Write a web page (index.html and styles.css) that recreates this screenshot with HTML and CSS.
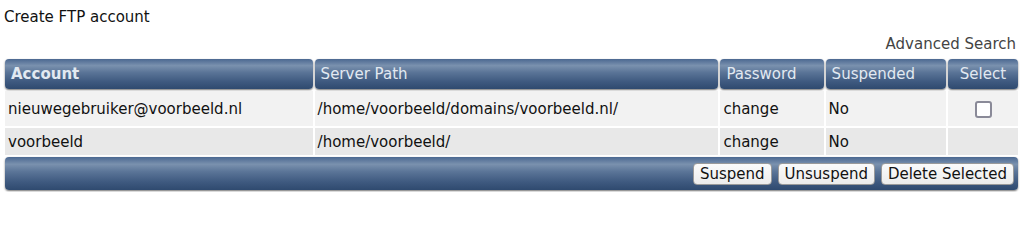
FILE: index.html
```html
<!DOCTYPE html>
<html>
<head>
<meta charset="utf-8">
<link rel="stylesheet" href="styles.css">
</head>
<body>
<div class="page">
  <div class="title">Create FTP account</div>
  <div class="search-line"><a class="adv">Advanced Search</a></div>
  <table class="list">
    <thead>
      <tr>
        <th class="c-account bold">Account</th>
        <th class="c-path">Server Path</th>
        <th class="c-pass">Password</th>
        <th class="c-susp">Suspended</th>
        <th class="c-sel center">Select</th>
      </tr>
    </thead>
    <tbody>
      <tr class="r1">
        <td>nieuwegebruiker@voorbeeld.nl</td>
        <td>/home/voorbeeld/domains/voorbeeld.nl/</td>
        <td>change</td>
        <td>No</td>
        <td class="center"><span class="check"></span></td>
      </tr>
      <tr class="r2">
        <td>voorbeeld</td>
        <td>/home/voorbeeld/</td>
        <td>change</td>
        <td>No</td>
        <td></td>
      </tr>
    </tbody>
    <tfoot>
      <tr>
        <td colspan="5" class="foot">
          <div class="btns">
            <button class="btn">Suspend</button>
            <button class="btn">Unsuspend</button>
            <button class="btn">Delete Selected</button>
          </div>
        </td>
      </tr>
    </tfoot>
  </table>
</div>
</body>
</html>
```

FILE: styles.css
```css
html, body {
  margin: 0;
  padding: 0;
  background: #ffffff;
}
body {
  font-family: "DejaVu Sans", Verdana, sans-serif;
  font-size: 15px;
  line-height: 18px;
  color: #111;
}
.page {
  padding: 8px 4px 0 3px;
}
.title {
  padding-left: 1px;
  height: 18px;
}
.search-line {
  display: flex;
  justify-content: flex-end;
  margin-top: 9px;
  padding-right: 4px;
}
.adv {
  color: #444;
}
.list {
  width: 100%;
  border-collapse: separate;
  border-spacing: 2px;
  margin-top: 4px;
}
.list th {
  height: 30px;
  padding: 0 6px;
  text-align: left;
  font-weight: normal;
  color: #e2e9f1;
  border-radius: 4px;
  background: linear-gradient(to bottom, #4b6891 0%, #7a91ae 22%, #5a7497 45%, #3f5a80 75%, #2f4a6f 100%);
  box-shadow: 0 1px 2px rgba(0,0,0,0.55);
}
.list th.bold { font-weight: bold; }
.list th.center, .list td.center { text-align: center; }
.c-account { width: 295px; }
.c-path { width: 391px; }
.c-pass { width: 91px; }
.c-susp { width: 108px; }
.c-sel { width: 58px; }
.list td {
  padding: 4px 3px;
  background: #f0f0f0;
}
.list tr.r1 td { height: 27px; background: #f2f2f2; }
.list tr.r2 td { height: 19px; background: #e8e8e8; }
.check {
  display: inline-block;
  width: 13px;
  height: 13px;
  border: 2px solid #8a8a98;
  border-radius: 3px;
  background: #fff;
  vertical-align: middle;
  margin-left: 2px;
}
.list td.foot {
  padding: 0 4px;
  height: 33px;
  border-radius: 4px;
  background: linear-gradient(to bottom, #4b6891 0%, #7a91ae 22%, #5a7497 45%, #3f5a80 75%, #2f4a6f 100%);
  box-shadow: 0 1px 2px rgba(0,0,0,0.55);
}
.btns {
  display: flex;
  justify-content: flex-end;
  gap: 6px;
}
.btn {
  font-family: "DejaVu Sans", Verdana, sans-serif;
  font-size: 15px;
  line-height: 18px;
  color: #111;
  height: 22px;
  padding: 0 6px;
  background: linear-gradient(to bottom, #fbfbfb, #ececec);
  border: 1px solid #9a9a9a;
  border-radius: 4px;
}
```
